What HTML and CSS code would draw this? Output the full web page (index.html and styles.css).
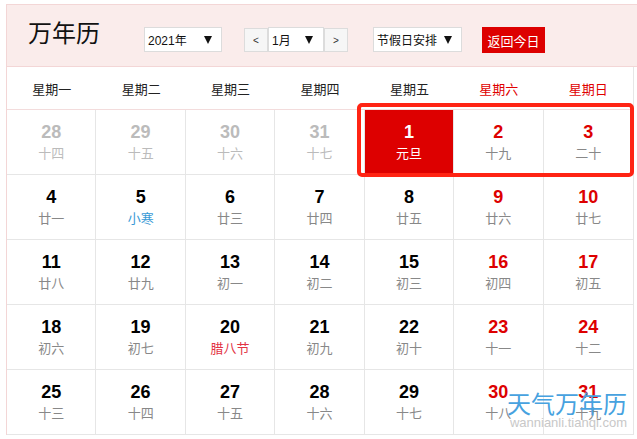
FILE: index.html
```html
<!DOCTYPE html>
<html lang="zh-CN">
<head>
<meta charset="utf-8">
<title>万年历</title>
<link rel="stylesheet" href="styles.css">
</head>
<body>
<div class="page">
  <div class="header">
    <div class="title">万年历</div>
    <div class="sel sel-year"><span>2021年</span><i class="arrow"></i></div>
    <div class="nav">
      <div class="step">&lt;</div>
      <div class="sel sel-month"><span>1月</span><i class="arrow"></i></div>
      <div class="step">&gt;</div>
    </div>
    <div class="sel sel-holiday"><span>节假日安排</span><i class="arrow"></i></div>
    <div class="today">返回今日</div>
  </div>
  <div class="cal">
    <div class="weekdays">
      <div class="wd">星期一</div>
      <div class="wd">星期二</div>
      <div class="wd">星期三</div>
      <div class="wd">星期四</div>
      <div class="wd">星期五</div>
      <div class="wd wkend">星期六</div>
      <div class="wd wkend">星期日</div>
    </div>
    <div class="days">
      <div class="day other"><b>28</b><span>十四</span></div>
      <div class="day other"><b>29</b><span>十五</span></div>
      <div class="day other"><b>30</b><span>十六</span></div>
      <div class="day other"><b>31</b><span>十七</span></div>
      <div class="day selected"><b>1</b><span>元旦</span></div>
      <div class="day wkend"><b>2</b><span>十九</span></div>
      <div class="day wkend"><b>3</b><span>二十</span></div>

      <div class="day"><b>4</b><span>廿一</span></div>
      <div class="day"><b>5</b><span class="term">小寒</span></div>
      <div class="day"><b>6</b><span>廿三</span></div>
      <div class="day"><b>7</b><span>廿四</span></div>
      <div class="day"><b>8</b><span>廿五</span></div>
      <div class="day wkend"><b>9</b><span>廿六</span></div>
      <div class="day wkend"><b>10</b><span>廿七</span></div>

      <div class="day"><b>11</b><span>廿八</span></div>
      <div class="day"><b>12</b><span>廿九</span></div>
      <div class="day"><b>13</b><span>初一</span></div>
      <div class="day"><b>14</b><span>初二</span></div>
      <div class="day"><b>15</b><span>初三</span></div>
      <div class="day wkend"><b>16</b><span>初四</span></div>
      <div class="day wkend"><b>17</b><span>初五</span></div>

      <div class="day"><b>18</b><span>初六</span></div>
      <div class="day"><b>19</b><span>初七</span></div>
      <div class="day"><b>20</b><span class="fest">腊八节</span></div>
      <div class="day"><b>21</b><span>初九</span></div>
      <div class="day"><b>22</b><span>初十</span></div>
      <div class="day wkend"><b>23</b><span>十一</span></div>
      <div class="day wkend"><b>24</b><span>十二</span></div>

      <div class="day"><b>25</b><span>十三</span></div>
      <div class="day"><b>26</b><span>十四</span></div>
      <div class="day"><b>27</b><span>十五</span></div>
      <div class="day"><b>28</b><span>十六</span></div>
      <div class="day"><b>29</b><span>十七</span></div>
      <div class="day wkend"><b>30</b><span>十八</span></div>
      <div class="day wkend"><b>31</b><span>十九</span></div>
    </div>
  </div>
  <div class="focus-ring"></div>
  <div class="watermark">
    <div class="wm-cn">天气万年历</div>
    <div class="wm-en">wannianli.tianqi.com</div>
  </div>
</div>
</body>
</html>
```
FILE: styles.css
```css
html, body {
  margin: 0;
  padding: 0;
  background: #fff;
}
body {
  overflow: hidden;
  font-family: "Liberation Sans", "Noto Sans CJK SC", sans-serif;
  color: #111;
}
.page {
  position: relative;
  width: 637px;
  height: 439px;
  padding: 4px 0 0 6px;
  box-sizing: border-box;
  overflow: hidden;
}
.header {
  width: 660px;
  height: 63px;
  box-sizing: border-box;
  background: #faeceb;
  border-top: 1px solid #f3d6d6;
  border-left: 1px solid #f3d6d6;
  border-bottom: 1px solid #f3d6d6;
  display: flex;
  align-items: flex-start;
  padding-left: 21px;
}
.title {
  width: 116px;
  margin-top: 17px;
  font-size: 24px;
  line-height: 24px;
  color: #111;
}
.sel {
  margin-top: 22px;
  height: 25px;
  box-sizing: border-box;
  background: #fff;
  border: 1px solid #dcdcdc;
  display: flex;
  align-items: center;
  justify-content: space-between;
  padding: 0 9px 0 3px;
  font-size: 12px;
  color: #111;
}
.arrow {
  display: block;
  width: 0;
  height: 0;
  border-left: 4px solid transparent;
  border-right: 4px solid transparent;
  border-top: 8px solid #111;
}
.sel-year { width: 78px; }
.sel-month { width: 56px; margin-top: 0; padding-right: 10px; }
.sel-holiday { width: 89px; margin-left: 25px; }
.nav {
  display: flex;
  align-items: flex-start;
  margin-left: 22px;
  margin-top: 22px;
}
.step {
  margin-top: 1px;
  width: 24px;
  height: 24px;
  box-sizing: border-box;
  background: #f6f6f6;
  border: 1px solid #dcdcdc;
  display: flex;
  align-items: center;
  justify-content: center;
  font-size: 10px;
  color: #333;
}
.today {
  margin-top: 22px;
  margin-left: 20px;
  width: 63px;
  height: 26px;
  background: #dd0000;
  color: #fff;
  font-size: 13px;
  display: flex;
  align-items: center;
  justify-content: center;
}
.cal {
  width: 628px;
  box-sizing: border-box;
  border-left: 1px solid #f3d6d6;
  border-right: 1px solid #e6e6e6;
}
.weekdays {
  display: grid;
  grid-template-columns: repeat(7, 1fr);
  height: 43px;
  box-sizing: border-box;
  border-bottom: 1px solid #f3dcdc;
}
.wd {
  display: flex;
  align-items: center;
  justify-content: center;
  font-size: 13px;
  color: #222;
}
.wd.wkend { color: #e00000; }
.days {
  display: grid;
  grid-template-columns: repeat(7, 1fr);
}
.day {
  height: 65px;
  box-sizing: border-box;
  border-right: 1px solid #e6e6e6;
  border-bottom: 1px solid #e6e6e6;
  display: flex;
  flex-direction: column;
  align-items: center;
  justify-content: center;
  gap: 4px;
}
.day:nth-child(7n) { border-right: none; }
.day b {
  font-size: 18px;
  line-height: 20px;
  font-weight: bold;
  color: #000;
}
.day span {
  font-size: 13px;
  line-height: 16px;
  color: #888;
}
.day.wkend b { color: #dd0000; }
.day.other b { color: #bbbbbb; }
.day.other span { color: #bbbbbb; }
.day span.term { color: #3a9ad6; }
.day span.fest { color: #e23344; }
.day.selected { background: #dd0000; }
.day.selected b, .day.selected span { color: #fff; }
.focus-ring {
  position: absolute;
  left: 357px;
  top: 103px;
  width: 277px;
  height: 74px;
  box-sizing: border-box;
  border: 4px solid #ff2414;
  border-radius: 5px;
}
.watermark {
  position: absolute;
  right: 10px;
  top: 391px;
  display: flex;
  flex-direction: column;
  align-items: flex-end;
}
.wm-cn {
  font-family: "Noto Sans CJK SC", sans-serif;
  font-size: 24px;
  line-height: 24px;
  color: #47a2df;
}
.wm-en {
  margin-top: 1px;
  font-size: 13px;
  line-height: 13px;
  color: #c8c8c8;
}
```
